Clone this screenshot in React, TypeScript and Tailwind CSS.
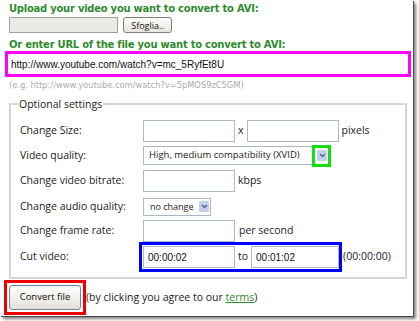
import React from "react";

const ui = "font-['Open_Sans',sans-serif]";
const arial = "font-['Liberation_Sans',Arial,sans-serif]";

function Chevron() {
  return (
    <svg width="7" height="5" viewBox="0 0 7 5">
      <path d="M1 1 L3.5 3.5 L6 1" stroke="#4a5f86" strokeWidth="1.4" fill="none" />
    </svg>
  );
}

function ArrowBtn() {
  return (
    <div className="flex h-[11px] w-[10px] items-center justify-center rounded-[1px] bg-[#c6d0ee]">
      <Chevron />
    </div>
  );
}

function TextInput({ w, value = "" }: { w: string; value?: string }) {
  return (
    <input
      readOnly
      defaultValue={value}
      className={`block ${w} h-[22px] border border-[#a9b8cb] bg-white px-[4px] text-[10px] text-[#111] outline-none ${arial}`}
    />
  );
}

export default function App() {
  return (
    <div className="h-[321px] w-[419px] overflow-hidden bg-white">
      <div
        className={`flex h-[316px] w-[413px] flex-col bg-white pl-[9px] pt-[2px] shadow-[1px_1px_0_#4a4a4a,3px_3px_3px_rgba(0,0,0,0.5)] ${ui}`}
      >
        <div className="h-[13px] font-['DejaVu_Sans',sans-serif] text-[10px] font-bold leading-[13px] tracking-[-0.25px] text-[#2f8a2f]">
          Upload your video you want to convert to AVI:
        </div>

        <div className="mt-[2px] flex h-[16px] items-stretch">
          <div className="w-[109px] border border-[#a0a0a0] bg-[#ebebe6]" />
          <button className="ml-[5px] w-[49px] rounded-[3px] border border-[#7c7c7c] bg-gradient-to-b from-[#fdfdfb] to-[#e6e5dd] text-[9px] leading-none text-[#111]">
            Sfoglia..
          </button>
        </div>

        <div className="mt-[6px] h-[12px] font-['DejaVu_Sans',sans-serif] text-[10px] font-bold leading-[12px] tracking-[-0.25px] text-[#2f8a2f]">
          Or enter URL of the file you want to convert to AVI:
        </div>

        <div className="-ml-[4px] flex h-[26px] w-[406px] items-stretch border-[3px] border-[#ff00ff] bg-white">
          <input
            readOnly
            defaultValue="http://www.youtube.com/watch?v=mc_5RyfEt8U"
            className={`block h-[20px] w-full bg-white pl-[3px] text-[10px] text-[#111] outline-none ${arial}`}
          />
        </div>

        <div className="mt-[2px] h-[12px] font-['DejaVu_Sans',sans-serif] text-[8.3px] leading-[12px] text-[#ababab]">
          (e.g. http://www.youtube.com/watch?v=5pMOS9zC5GM)
        </div>

        <fieldset className="mt-[6px] w-[398px] border-2 border-[#d6d6d6] pb-[5px] text-[10.5px] text-[#222]">
          <legend className="ml-[7px] px-[1px] leading-[14px]">Optional settings</legend>
          <div className="flex flex-col pl-[9px] pt-[7px]">
            <div className="flex h-[25px] items-center">
              <div className="w-[123px] shrink-0">Change Size:</div>
              <TextInput w="w-[92px]" />
              <span className="mx-[3px]">x</span>
              <TextInput w="w-[92px]" />
              <span className="ml-[3px]">pixels</span>
            </div>

            <div className="flex h-[25px] items-center">
              <div className="w-[123px] shrink-0">Video quality:</div>
              <div className="relative flex h-[19px] w-[186px] items-center border border-[#a9b8cb] bg-white pl-[5px] pr-[1px] text-[9.5px]">
                <span>High, medium compatibility (XVID)</span>
                <div className="ml-auto">
                  <ArrowBtn />
                </div>
                <div className="absolute left-[168px] top-[-2px] h-[22px] w-[19px] border-[3px] border-[#11e011]" />
              </div>
            </div>

            <div className="flex h-[26px] items-center">
              <div className="w-[123px] shrink-0">Change video bitrate:</div>
              <TextInput w="w-[92px]" />
              <span className="ml-[3px]">kbps</span>
            </div>

            <div className="flex h-[25px] items-center">
              <div className="w-[123px] shrink-0">Change audio quality:</div>
              <div className="flex h-[18px] w-[68px] items-center border border-[#a9b8cb] bg-white pl-[6px] pr-[1px] text-[9px]">
                <span>no change</span>
                <div className="ml-auto">
                  <ArrowBtn />
                </div>
              </div>
            </div>

            <div className="flex h-[23px] items-center">
              <div className="w-[123px] shrink-0">Change frame rate:</div>
              <TextInput w="w-[92px]" />
              <span className="ml-[4px]">per second</span>
            </div>

            <div className="flex h-[30px] items-center">
              <div className="w-[119px] shrink-0">Cut video:</div>
              <div className="flex h-[30px] items-center border-[3px] border-[#0000ff] pl-[1px]">
                <TextInput w="w-[92px]" value="00:00:02" />
                <span className="ml-[3px]">to</span>
                <div className="ml-[3px]">
                  <TextInput w="w-[88px]" value="00:01:02" />
                </div>
              </div>
              <span className="ml-[1px]">(00:00:00)</span>
            </div>
          </div>
        </fieldset>

        <div className="mt-[1px] flex items-center text-[10.5px] text-[#222]">
          <div className="-ml-[5px] flex h-[35px] w-[82px] items-center justify-center border-[3px] border-[#ee0000]">
            <button className="h-[25px] w-[72px] rounded-[3px] border border-[#6f8296] bg-gradient-to-b from-[#ffffff] to-[#e2e1d9] text-[9.5px] text-[#111]">
              Convert file
            </button>
          </div>
          <span>
            (by clicking you agree to our{" "}
            <span className="text-[#2f8a2f] underline">terms</span>)
          </span>
        </div>
      </div>
    </div>
  );
}
